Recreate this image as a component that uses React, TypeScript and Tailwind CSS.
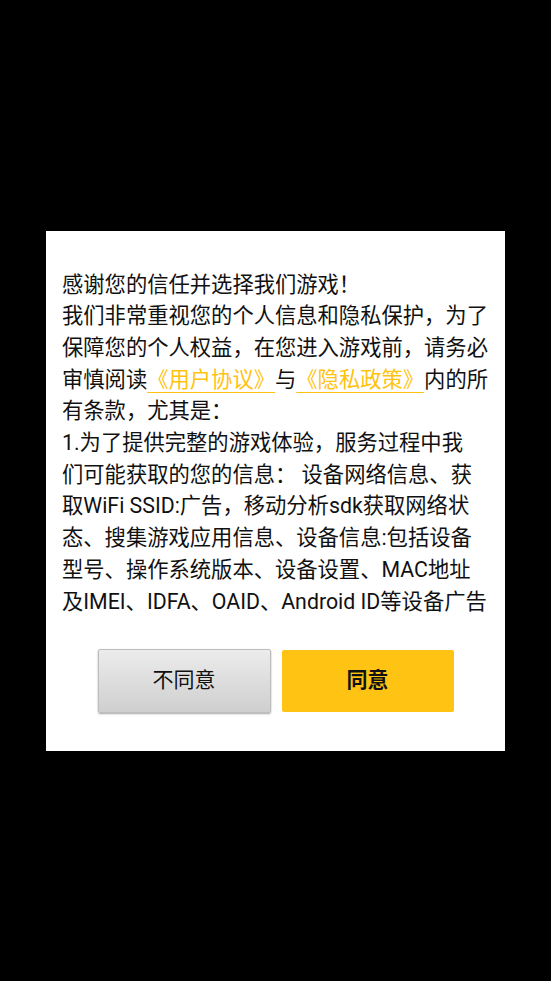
const PrivacyDialog = () => {
  return (
    <div className="w-[459px] h-[520px] bg-white flex flex-col pt-[38px] px-4">
      <div className="h-[349px] overflow-hidden text-[21.3px] leading-[31.7px] text-[#111] whitespace-pre">
        {"感谢您的信任并选择我们游戏！\n我们非常重视您的个人信息和隐私保护，为了\n保障您的个人权益，在您进入游戏前，请务必\n审慎阅读"}
        <span className="text-[#ffc20e] underline underline-offset-[5px] decoration-1">{"《用户协议》"}</span>
        {"与"}
        <span className="text-[#ffc20e] underline underline-offset-[5px] decoration-1">{"《隐私政策》"}</span>
        {"内的所\n有条款，尤其是：\n1.为了提供完整的游戏体验，服务过程中我\n们可能获取的您的信息： 设备网络信息、获\n取WiFi SSID:广告，移动分析sdk获取网络状\n态、搜集游戏应用信息、设备信息:包括设备\n型号、操作系统版本、设备设置、MAC地址\n及IMEI、IDFA、OAID、Android ID等设备广告\n标识符，以及与设备相关的应用信息。"}
      </div>
      <div className="flex justify-center gap-[11px] mt-[31px]">
        <button className="w-[173px] h-[64px] rounded-[2px] border border-[#bdbdbd] bg-gradient-to-b from-[#ececec] to-[#cfcfcf] shadow-[0_1px_2px_rgba(0,0,0,0.35)] text-[21px] text-[#111]">
          不同意
        </button>
        <button className="w-[172px] h-[62px] mt-px rounded-[2px] bg-[#ffc314] text-[21px] font-bold text-[#111]">
          同意
        </button>
      </div>
    </div>
  );
};

export default function App() {
  return (
    <div
      className="w-[551px] h-[981px] bg-black flex items-center justify-center"
      style={{ fontFamily: "Roboto, 'Noto Sans CJK SC', sans-serif" }}
    >
      <PrivacyDialog />
    </div>
  );
}
